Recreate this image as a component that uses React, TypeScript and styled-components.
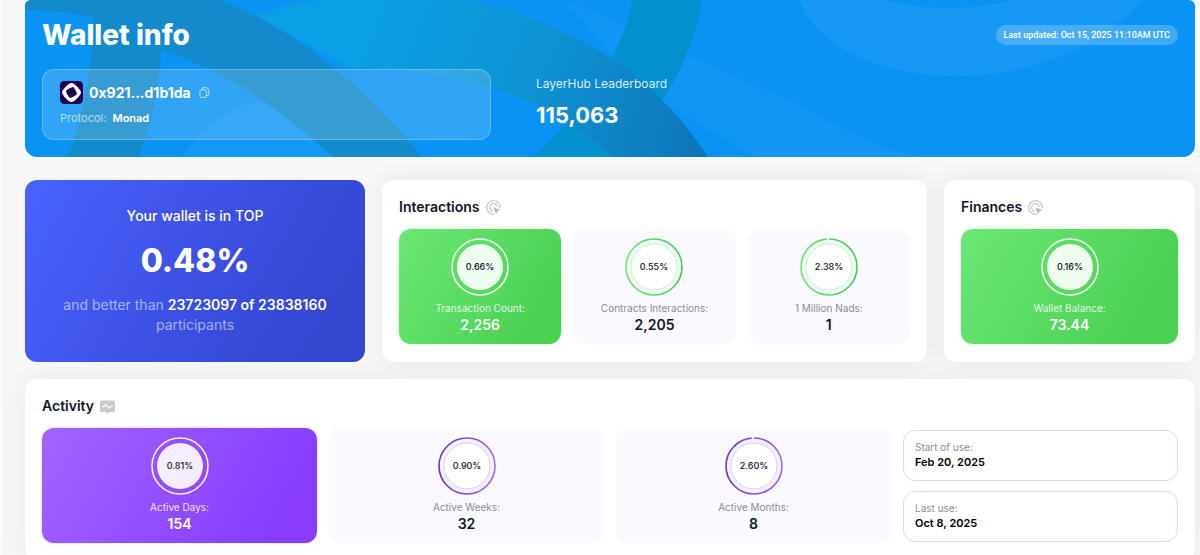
import React from 'react';
import styled, { createGlobalStyle, css } from 'styled-components';

const GlobalStyle = createGlobalStyle`
  *, *::before, *::after { box-sizing: border-box; }
  body {
    margin: 0;
    background: #f7f7f7;
    color: #14142b;
    font-family: Inter, "Liberation Sans", sans-serif;
  }
  h1, h2, p, dl, dd, dt { margin: 0; }
`;

type Tone = 'green' | 'purple';

const tones = {
  green: { from: '#6ce775', to: '#4ad152', ringFrom: '#6be472', ringTo: '#42c94b', halo: '#f0fcf3', inner: '#bfeccb' },
  purple: { from: '#a164ff', to: '#883dff', ringFrom: '#6a2fd0', ringTo: '#9a6ae6', halo: '#f8effe', inner: '#d3c3f3' },
};

const Page = styled.main`
  display: flex;
  flex-direction: column;
  padding: 0 5px 0 23px;
  height: 100vh;
  overflow: hidden;
  border-left: 2px solid #fcfcfc;
`;

const Banner = styled.header`
  position: relative;
  flex: none;
  overflow: hidden;
  padding: 17px;
  border-radius: 6px 6px 12px 12px;
  background: #0a93f3;
  color: #fff;
`;

const BannerArt = styled.svg`
  position: absolute;
  inset: 0;
  width: 100%;
  height: 100%;
`;

const BannerTop = styled.div`
  position: relative;
  display: flex;
  justify-content: space-between;
  align-items: center;
  height: 36px;
`;

const PageTitle = styled.h1`
  font-size: 28px;
  line-height: 36px;
  font-weight: 800;
`;

const UpdatedPill = styled.span`
  padding: 0 8px;
  border-radius: 10px;
  background: rgba(255, 255, 255, 0.22);
  font-family: Roboto, Inter, sans-serif;
  font-size: 9px;
  line-height: 20px;
  font-weight: 500;
`;

const BannerBody = styled.div`
  position: relative;
  display: grid;
  grid-template-columns: 449fr 642fr;
  gap: 45px;
  margin-top: 16px;
`;

const WalletBox = styled.section`
  padding: 11px 17px 13px;
  border: 1px solid rgba(255, 255, 255, 0.24);
  border-radius: 12px;
  background: rgba(255, 255, 255, 0.16);
`;

const AddressRow = styled.div`
  display: flex;
  align-items: center;
  height: 23px;
  font-size: 14px;
  font-weight: 700;
`;

const Address = styled.span`
  margin: 0 8px 0 6px;
`;

const CopyButton = styled.button`
  display: flex;
  padding: 0;
  border: 0;
  background: none;
  color: rgba(255, 255, 255, 0.75);
  cursor: pointer;
`;

const Protocol = styled.p`
  margin-top: 6px;
  font-size: 11px;
  line-height: 16px;
  color: rgba(255, 255, 255, 0.65);

  strong {
    margin-left: 3px;
    font-weight: 600;
    color: #fff;
  }
`;

const Leaderboard = styled.section`
  padding-top: 7px;
`;

const LeaderLabel = styled.p`
  font-size: 12px;
  line-height: 16px;
  color: rgba(255, 255, 255, 0.85);
`;

const LeaderValue = styled.p`
  margin-top: 9px;
  font-size: 22px;
  line-height: 28px;
  font-weight: 700;
`;

const Summary = styled.div`
  display: grid;
  grid-template-columns: 340fr 545fr 251fr;
  gap: 17px;
  margin: 23px 0 17px;
`;

const TopCard = styled.section`
  padding: 26px 20px 0;
  border-radius: 12px;
  background: linear-gradient(120deg, #4a62ff 0%, #3d52e6 45%, #3346cf 90%);
  color: #fff;
  text-align: center;
`;

const TopLead = styled.p`
  font-size: 14px;
  line-height: 20px;
  font-weight: 500;
`;

const TopValue = styled.p`
  margin: 15px 0 14px;
  font-size: 32px;
  line-height: 40px;
  font-weight: 800;
`;

const TopText = styled.p`
  font-size: 14px;
  line-height: 20px;
  color: rgba(255, 255, 255, 0.55);

  strong {
    font-weight: 600;
    color: #fff;
  }
`;

const Card = styled.section`
  padding: 17px 17px 18px;
  border-radius: 12px;
  background: #fff;
  box-shadow: 0 0 24px rgba(20, 50, 40, 0.07);
`;

const CardTitle = styled.h2`
  display: flex;
  align-items: center;
  gap: 6px;
  margin-bottom: 12px;
  font-size: 14px;
  line-height: 20px;
  font-weight: 600;
`;

const Tiles = styled.div<{ $columns: number }>`
  display: grid;
  grid-template-columns: repeat(${(p) => p.$columns}, 1fr);
  gap: 12px;
`;

const Tile = styled.article<{ $tone: Tone; $active?: boolean }>`
  display: flex;
  flex-direction: column;
  align-items: center;
  padding: 9px 8px 10px;
  border-radius: 12px;
  background: #faf9ff;
  ${(p) =>
    p.$active &&
    css`
      background: linear-gradient(120deg, ${tones[p.$tone].from}, ${tones[p.$tone].to} 85%);
      box-shadow: 0 0 3px ${tones[p.$tone].from}66;
      color: #fff;
    `}
`;

const RingSvg = styled.svg`
  display: block;
  font-size: 9px;
  font-weight: 500;
`;

const TileLabel = styled.p<{ $active?: boolean }>`
  margin-top: 5px;
  font-size: 10px;
  line-height: 14px;
  color: ${(p) => (p.$active ? 'rgba(255, 255, 255, 0.85)' : '#8c8b97')};
`;

const TileValue = styled.p`
  margin-top: 1px;
  font-size: 14px;
  line-height: 18px;
  font-weight: 600;
`;

const Dates = styled.dl`
  display: flex;
  flex-direction: column;
  justify-content: center;
  gap: 10px;
`;

const DateBox = styled.div`
  padding: 9px 11px;
  border: 1px solid #e2d4fa;
  border-radius: 12px;
  color: #000;

  dt {
    font-size: 10px;
    line-height: 14px;
    color: #8c8b97;
  }

  dd {
    font-size: 11px;
    line-height: 17px;
    font-weight: 600;
  }
`;

interface RingProps {
  id: string;
  percent: string;
  tone: Tone;
  active?: boolean;
}

function Ring({ id, percent, tone, active }: RingProps) {
  const t = tones[tone];
  const r = 28;
  const full = 2 * Math.PI * r;
  const gap = parseFloat(percent) > 2 ? 2.6 : 0;
  return (
    <RingSvg width="58" height="58" viewBox="0 0 58 58">
      <defs>
        <linearGradient id={id} x1="0" y1="0" x2="0" y2="1">
          <stop offset="0" stopColor={t.ringFrom} />
          <stop offset="1" stopColor={t.ringTo} />
        </linearGradient>
      </defs>
      {!active && <circle cx="29" cy="29" r="27" fill={t.halo} />}
      <circle
        cx="29"
        cy="29"
        r={r}
        fill="none"
        stroke={active ? '#fff' : `url(#${id})`}
        strokeOpacity={active ? 0.9 : 1}
        strokeWidth="1.6"
        strokeDasharray={gap ? `${full - gap} ${gap}` : undefined}
        transform="rotate(-90 29 29)"
      />
      <circle
        cx="29"
        cy="29"
        r="23"
        fill="#fff"
        fillOpacity={active ? 0.9 : 1}
        stroke={active ? 'none' : t.inner}
        strokeWidth="0.8"
      />
      <text x="29" y="32" textAnchor="middle" fill="#14142b">
        {percent}
      </text>
    </RingSvg>
  );
}

interface StatProps {
  id: string;
  percent: string;
  label: string;
  value: string;
  tone: Tone;
  active?: boolean;
}

function Stat({ id, percent, label, value, tone, active }: StatProps) {
  return (
    <Tile $tone={tone} $active={active}>
      <Ring id={id} percent={percent} tone={tone} active={active} />
      <TileLabel $active={active}>{label}</TileLabel>
      <TileValue>{value}</TileValue>
    </Tile>
  );
}

function TargetIcon() {
  return (
    <svg width="15" height="15" viewBox="0 0 15 15" fill="none" stroke="#c6c6cb" strokeWidth="1.2" strokeLinecap="round" aria-hidden="true">
      <path d="M14.3 8 A6.8 6.8 0 1 0 8 14.3" />
      <path d="M11.2 6.4 A3.9 3.9 0 1 0 6.4 11.2" />
      <path d="M7.3 7.3 L14.3 9.8 L11.6 11.2 L10 14.2 Z" fill="#b9b9bf" stroke="none" />
    </svg>
  );
}

function MonitorIcon() {
  return (
    <svg width="15" height="15" viewBox="0 0 15 15" fill="none" aria-hidden="true">
      <rect x="0" y="1.6" width="15" height="11.4" rx="1.6" fill="#c8c8cd" />
      <path d="M5 12.5 H10 L7.5 14.8 Z" fill="#c8c8cd" />
      <path d="M2.4 7.6 H4 L6 5.2 L9 9.2 L10.9 7.2 H12.6" stroke="#fff" strokeWidth="1.1" strokeLinecap="round" strokeLinejoin="round" />
    </svg>
  );
}

function MonadLogo() {
  return (
    <svg width="23" height="23" viewBox="0 0 23 23" aria-hidden="true">
      <rect width="23" height="23" rx="4.5" fill="#200052" />
      <path
        fillRule="evenodd"
        fill="#fff"
        d="M11.5 2 C8.8 2 2 8.8 2 11.5 S8.8 21 11.5 21 S21 14.2 21 11.5 S14.2 2 11.5 2 Z M10 16.9 C8.9 16.6 5.8 11.1 6.1 10 S11.9 5.8 13 6.1 S17.2 11.9 16.9 13 S11.1 17.2 10 16.9 Z"
      />
    </svg>
  );
}

function CopyIcon() {
  return (
    <svg width="11" height="11" viewBox="0 0 11 11" fill="none" stroke="currentColor" strokeWidth="0.9" strokeLinejoin="round" aria-hidden="true">
      <rect x="1" y="2.8" width="6.4" height="7.6" rx="1.2" />
      <path d="M3.2 2.8 V1.8 Q3.2 0.7 4.3 0.7 H7.6 L9.9 2.8 V7.4 Q9.9 8.5 8.8 8.5 H7.4" />
    </svg>
  );
}

function Art() {
  return (
    <BannerArt viewBox="25 0 1170 157" preserveAspectRatio="none" aria-hidden="true">
      <defs>
        <linearGradient id="sweep" gradientUnits="userSpaceOnUse" x1="380" y1="0" x2="710" y2="130">
          <stop offset="0" stopColor="#0b9fe5" />
          <stop offset="0.5" stopColor="#0e92d3" />
          <stop offset="1" stopColor="#0e75ba" />
        </linearGradient>
      </defs>
      <path d="M563 0 C640 28 745 85 800 104 C850 134 885 150 920 157 H755 C720 136 690 116 650 96 Z" fill="#1196f4" />
      <path d="M800 0 C815 46 880 76 955 76 C1035 76 1105 45 1142 0 H1012 C980 10 915 10 886 0 Z" fill="#1798f4" />
      <path d="M183 157 C200 128 228 106 262 100 L335 157 Z" fill="#1298f5" />
      <path d="M633 0 C620 62 577 118 533 157 H613 C655 120 692 64 702 0 Z" fill="#0490cf" />
      <path d="M257 16 C280 6 300 2 325 0 H470 C580 26 655 76 708 157 H613 C550 98 455 66 350 68 Z" fill="url(#sweep)" />
      <path d="M25 0 H220 C300 32 370 92 422 157 H333 C285 112 225 70 161 50 C159 90 151 125 139 157 H68 C82 120 91 80 94 18 C70 12 48 10 25 10 Z" fill="#138acc" />
    </BannerArt>
  );
}

export default function App() {
  return (
    <>
      <GlobalStyle />
      <Page>
        <Banner>
          <Art />
          <BannerTop>
            <PageTitle>Wallet info</PageTitle>
            <UpdatedPill>Last updated: Oct 15, 2025 11:10AM UTC</UpdatedPill>
          </BannerTop>
          <BannerBody>
            <WalletBox>
              <AddressRow>
                <MonadLogo />
                <Address>0x921...d1b1da</Address>
                <CopyButton type="button" aria-label="Copy address">
                  <CopyIcon />
                </CopyButton>
              </AddressRow>
              <Protocol>
                Protocol: <strong>Monad</strong>
              </Protocol>
            </WalletBox>
            <Leaderboard>
              <LeaderLabel>LayerHub Leaderboard</LeaderLabel>
              <LeaderValue>115,063</LeaderValue>
            </Leaderboard>
          </BannerBody>
        </Banner>

        <Summary>
          <TopCard>
            <TopLead>Your wallet is in TOP</TopLead>
            <TopValue>0.48%</TopValue>
            <TopText>
              and better than <strong>23723097 of 23838160</strong> participants
            </TopText>
          </TopCard>
          <Card>
            <CardTitle>
              Interactions <TargetIcon />
            </CardTitle>
            <Tiles $columns={3}>
              <Stat id="tx" percent="0.66%" label="Transaction Count:" value="2,256" tone="green" active />
              <Stat id="contracts" percent="0.55%" label="Contracts Interactions:" value="2,205" tone="green" />
              <Stat id="nads" percent="2.38%" label="1 Million Nads:" value="1" tone="green" />
            </Tiles>
          </Card>
          <Card>
            <CardTitle>
              Finances <TargetIcon />
            </CardTitle>
            <Tiles $columns={1}>
              <Stat id="balance" percent="0.16%" label="Wallet Balance:" value="73.44" tone="green" active />
            </Tiles>
          </Card>
        </Summary>

        <Card>
          <CardTitle>
            Activity <MonitorIcon />
          </CardTitle>
          <Tiles $columns={4}>
            <Stat id="days" percent="0.81%" label="Active Days:" value="154" tone="purple" active />
            <Stat id="weeks" percent="0.90%" label="Active Weeks:" value="32" tone="purple" />
            <Stat id="months" percent="2.60%" label="Active Months:" value="8" tone="purple" />
            <Dates>
              <DateBox>
                <dt>Start of use:</dt>
                <dd>Feb 20, 2025</dd>
              </DateBox>
              <DateBox>
                <dt>Last use:</dt>
                <dd>Oct 8, 2025</dd>
              </DateBox>
            </Dates>
          </Tiles>
        </Card>
      </Page>
    </>
  );
}
